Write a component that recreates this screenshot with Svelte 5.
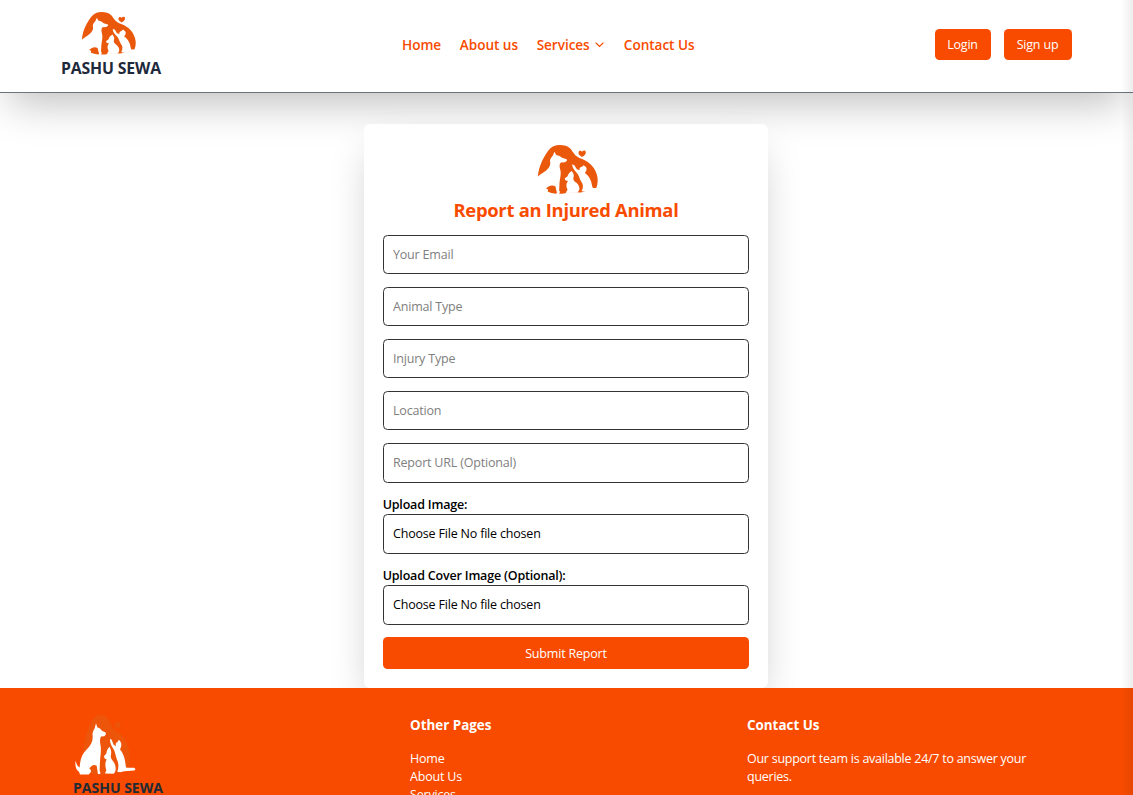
<script>
  const fields = ['Your Email', 'Animal Type', 'Injury Type', 'Location', 'Report URL (Optional)'];
  const uploads = ['Upload Image:', 'Upload Cover Image (Optional):'];
  const pages = ['Home', 'About Us', 'Services', 'Contact Us'];
</script>

{#snippet logo()}
  <svg class="logo" viewBox="39 8.5 142 179" preserveAspectRatio="none" aria-hidden="true">
    <path class="hill" fill="#ea580c" d="M39 123C40 100 46 66 64 28C71 14 80 8.500 90 8.500C101 8.500 110 12 116 22C122 34 127 52 142 59C160 69 177 94 180 130C181 148 179 163 175 172L165 175L150 179L141 184L130 183L107 182L105 186Q98 190 90 188L88 184L84 184L82 188Q70 187 61 180Z" />
    <path class="hill" fill="#ea580c" d="M143 53C137 46 134 42 135 35C136 28 141 28 143 33C146 27 152 27 152 35C153 42 149 47 143 53Z" />
    <g fill="#fff">
      <path d="M78 33L82 45L90 49L96 56L107 61L108 66L103 72L93 73C89 80 90 88 91 96C95 112 91 130 90 148L89 176L91 181L91 185L84 186L80 161C75 157 69 157 64 162L58 168L63 174L62 181L56 187L30 187L27 179C18 174 14 158 17 146C18 152 22 163 29 166C30 142 36 125 50 112C62 100 69 88 68 72C66 60 71 54 74 48Z" />
      <path d="M119 104C112 110 110 118 109 124L102 132L104 139L110 142C105 150 105 163 109 174L105 184L130 185C140 180 139 160 130 148C125 142 121 136 123 128C125 118 123 114 119 104Z" />
      <path d="M120 80L125 83L131 98L138 102C136 96 138 90 142 90L147 83L151 88C157 95 153 106 150 112C160 122 166 142 167 160L169 167L192 167Q200 171 193 175L163 177L150 180L142 179C147 165 146 152 141 143C137 132 136 120 130 110C122 98 120 90 120 80Z" />
    </g>
  </svg>
{/snippet}

<div class="page">
  <header>
    <div class="brand">{@render logo()}<b>PASHU SEWA</b></div>
    <nav>
      <a href="#home">Home</a>
      <a href="#about">About us</a>
      <a href="#services">Services
        <svg class="chev" viewBox="0 0 9 6" aria-hidden="true"><path d="M1 1l3.500 3.500L8 1" fill="none" stroke="currentColor" stroke-width="1.100" stroke-linecap="round" /></svg>
      </a>
      <a href="#contact">Contact Us</a>
    </nav>
    <div class="auth"><button class="login">Login</button><button class="signup">Sign up</button></div>
  </header>

  <main>
    <form>
      {@render logo()}
      <h2>Report an Injured Animal</h2>
      {#each fields as f}
        <input placeholder={f} />
      {/each}
      {#each uploads as u}
        <div class="upload">
          <span>{u}</span>
          <div class="file">Choose File No file chosen</div>
        </div>
      {/each}
      <button type="button" class="submit">Submit Report</button>
    </form>
  </main>

  <footer>
    <div class="fbrand">{@render logo()}<b>PASHU SEWA</b></div>
    <div>
      <h3>Other Pages</h3>
      <ul>{#each pages as p}<li>{p}</li>{/each}</ul>
    </div>
    <div>
      <h3>Contact Us</h3>
      <p>Our support team is available 24/7 to answer your queries.</p>
    </div>
  </footer>
  <div class="edge"></div>
</div>

<style>
  :global(body) { background: #fff; overflow: hidden; }
  .page, .page * { box-sizing: border-box; }
  .page {
    position: relative;
    height: 795px;
    overflow: hidden;
    font-family: 'Open Sans', sans-serif;
    font-size: 12.5px;
    letter-spacing: -0.19px;
    color: #000;
  }
  button, input { font: inherit; letter-spacing: inherit; }
  .logo { display: block; overflow: visible; }
  header {
    display: grid;
    grid-template-columns: 341px 1fr auto;
    align-items: center;
    height: 93px;
    padding: 0 61px;
    border-bottom: 1px solid #6b7280;
    box-shadow: 0 20px 40px -9.600px rgba(0, 0, 0, 0.25);
  }
  .brand { width: 100px; height: 92px; padding-top: 11.700px; }
  .brand .logo { width: 54px; height: 42.300px; margin-left: 21.300px; }
  .brand b { display: block; margin-top: 4px; font-size: 15.800px; line-height: 20px; letter-spacing: -0.140px; color: #1e293b; white-space: nowrap; }
  nav { display: flex; gap: 18.700px; font-size: 13.600px; font-weight: 600; letter-spacing: -0.050px; line-height: 20px; margin-top: -2.500px; }
  nav a { color: #f84b00; text-decoration: none; white-space: nowrap; }
  .chev { width: 9px; height: 6px; margin: 0 1.500px 2px 1.500px; }
  .auth { display: flex; justify-content: flex-end; gap: 13px; margin-top: -3px; }
  .auth button, .submit { border: 0; border-radius: 4.500px; background: #f84b00; color: #fff; padding: 0; }
  .auth button { height: 31px; padding-right: 1px; }
  .login { width: 56px; }
  .signup { width: 68px; }
  main { display: flex; justify-content: center; padding-top: 31px; }
  form {
    display: flex;
    flex-direction: column;
    gap: 12.700px;
    width: 404px;
    height: 564px;
    margin-right: 1px;
    padding: 21px 18.700px 0;
    border-radius: 6px;
    background: #fff;
    box-shadow: 0 20px 40px -9.600px rgba(0, 0, 0, 0.25);
  }
  form .logo { width: 60px; height: 48.500px; margin-left: 155.300px; flex: none; }
  h2 { margin: -9.200px 0 -0.900px; color: #f84b00; font-size: 18.400px; line-height: 26px; letter-spacing: -0.280px; text-align: center; height: 26px; }
  input, .file {
    width: 100%;
    height: 39.400px;
    flex: none;
    border: 1px solid #333;
    border-radius: 4.500px;
    padding: 0 9.300px;
    background: #fff;
    line-height: 38px;
  }
  input::placeholder { color: #808080; opacity: 1; }
  .upload span { display: block; height: 19px; line-height: 19px; font-weight: 600; }
  .submit { height: 31.600px; flex: none; }
  footer {
    position: relative;
    display: grid;
    grid-template-columns: 337px 337px 300px;
    height: 220px;
    padding: 27px 0 0 73px;
    background: #f84b00;
    color: #fff;
    line-height: 18.400px;
  }
  .fbrand .logo { width: 47.300px; height: 59.700px; margin-left: 10px; }
  .fbrand .hill { opacity: 0.8; }
  .fbrand b { display: block; margin-top: 3.500px; font-size: 14.100px; line-height: 20px; letter-spacing: -0.050px; color: #212b36; }
  h3 { margin: 0 0 14.600px; font-size: 13.400px; line-height: 20px; letter-spacing: 0; }
  ul { list-style: none; margin: 0; padding: 0; }
  p { margin: 0; letter-spacing: -0.260px; }
  .edge { position: absolute; top: 0; right: 0; width: 12px; height: 795px; background: linear-gradient(to right, transparent, rgba(0, 0, 0, 0.07)); }
</style>
